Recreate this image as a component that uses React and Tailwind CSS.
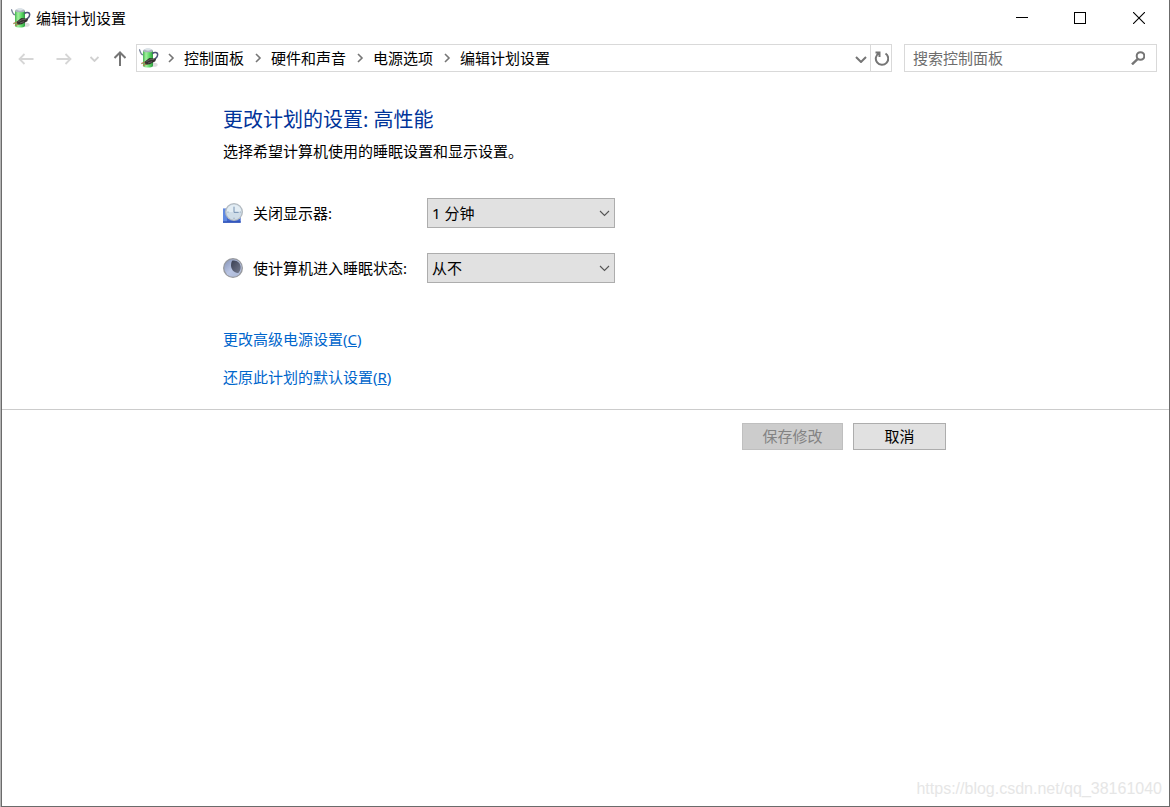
import { useState } from 'react'

const crumbs = ['控制面板', '硬件和声音', '电源选项', '编辑计划设置'];

function PowerIcon() {
    return(
        <svg viewBox="0 0 60 60" className="h-5 w-5 shrink-0" aria-hidden="true">
            <defs>
                <linearGradient id="can" x1="0" x2="1" y1="0" y2="0">
                    <stop offset="0" stopColor="#45b552" />
                    <stop offset="0.3" stopColor="#a4f09f" />
                    <stop offset="0.65" stopColor="#5cd864" />
                    <stop offset="1" stopColor="#2f9c42" />
                </linearGradient>
            </defs>
            <ellipse cx="46" cy="50" rx="10" ry="6" fill="#dcdcdc" />
            <path d="M1 4l4 10c2 5 5 7 10 6" fill="none" stroke="#77829a" strokeWidth="4" />
            <path d="M12 9v45c3 6 27 6 30 0V9z" fill="url(#can)" />
            <ellipse cx="27" cy="8" rx="15" ry="5" fill="#a9b4bc" />
            <ellipse cx="27" cy="4" rx="9" ry="4" fill="#dce3e8" />
            <path d="M40 17c5-5 16-5 16 3 0 8-6 10-10 15" fill="none" stroke="#4d5478" strokeWidth="4.500" />
            <path d="M15 43l16-13 20 2-2 8-17 9-12 1z" fill="#35302f" />
            <path d="M22 41l11-6 13-1M27 45l12-4" fill="none" stroke="#77716e" strokeWidth="2" />
            <path d="M18 42l-11 5M22 48l-10 5" stroke="#a8834f" strokeWidth="4" />
        </svg>
    );
}

function DisplayIcon() {
    return(
        <svg viewBox="0 0 60 60" className="h-5 w-5 shrink-0" aria-hidden="true">
            <path d="M0 17h53v42H0z" fill="#3f66cf" />
            <path d="M0 17h12v42H0z" fill="#6089e0" />
            <path d="M0 55h53v4H0z" fill="#2f50b5" />
            <circle cx="33" cy="27" r="27" fill="#b3bac0" />
            <circle cx="33" cy="27" r="23" fill="#cfdde8" />
            <path d="M11 27a22 22 0 0 1 44 0z" fill="#e3edf4" />
            <path d="M33 11v17h14" fill="none" stroke="#7490b0" strokeWidth="3" />
            <path d="M33 44v4M13 27h4M50 27h4" stroke="#7f93a8" strokeWidth="2" />
        </svg>
    );
}

function SleepIcon() {
    return(
        <svg viewBox="0 0 60 60" className="h-5 w-5 shrink-0" aria-hidden="true">
            <defs>
                <linearGradient id="night" x1="0" x2="1" y1="0" y2="1">
                    <stop offset="0" stopColor="#3a3f52" />
                    <stop offset="1" stopColor="#747a8e" />
                </linearGradient>
                <linearGradient id="moon" x1="0" x2="1" y1="0" y2="1">
                    <stop offset="0" stopColor="#8391b5" />
                    <stop offset="0.5" stopColor="#b9c5e4" />
                    <stop offset="1" stopColor="#aab6d2" />
                </linearGradient>
            </defs>
            <circle cx="30" cy="30" r="30" fill="#97999e" />
            <circle cx="30" cy="30" r="26" fill="url(#moon)" />
            <path d="M27 8c14-4 26 7 26 20 0 7-3 13-7 17-12 1-22-10-22-23 0-5 1-10 3-14z" fill="url(#night)" />
        </svg>
    );
}

function Separator() {
    return(
        <svg viewBox="0 0 27 12" className="h-3 w-[27px] shrink-0" fill="none" stroke="#767676" strokeWidth="1.6" aria-hidden="true">
            <path d="M12 2l4 4-4 4" />
        </svg>
    );
}

function PlanSetting(props) {
    let [value, setValue] = useState(props.options[0]);

    return(
        <div className="flex items-center">
            {props.icon}
            <label htmlFor={props.id} className="w-[184px] shrink-0 pl-[10px]">{props.label}</label>
            <div className="relative w-[188px]">
                <select id={props.id} value={value} onChange={(e) => setValue(e.target.value)} className="block h-[30px] w-full appearance-none border border-[#adadad] bg-[#e1e1e1] pl-1 pr-6 text-black">
                    {props.options.map(option => <option key={option}>{option}</option>)}
                </select>
                <svg viewBox="0 0 12 8" className="pointer-events-none absolute right-1 top-[11px] h-2 w-3" fill="none" stroke="#555" strokeWidth="1.1" aria-hidden="true">
                    <path d="M1 2l4.500 4.500L10 2" />
                </svg>
            </div>
        </div>
    );
}

function TitleBar() {
    return(
        <header className="flex h-9 items-center pl-[9px]">
            <PowerIcon />
            <h1 className="grow pl-[5px]">编辑计划设置</h1>
            <button aria-label="最小化" className="flex h-9 w-[58px] items-center justify-center">
                <svg viewBox="0 0 12 12" className="h-3 w-3" stroke="#000" shapeRendering="crispEdges"><path d="M0 5.500h12" /></svg>
            </button>
            <button aria-label="最大化" className="flex h-9 w-[58px] items-center justify-center">
                <svg viewBox="0 0 12 12" className="h-3 w-3" fill="none" stroke="#000" shapeRendering="crispEdges"><path d="M.5.5h11v11H.5z" /></svg>
            </button>
            <button aria-label="关闭" className="flex h-9 w-[60px] items-center justify-center">
                <svg viewBox="0 0 12 12" className="h-3 w-3" stroke="#000" strokeWidth="1.1"><path d="M0 0l12 12M12 0L0 12" /></svg>
            </button>
        </header>
    );
}

function NavBar() {
    return(
        <nav className="flex h-11 items-center pl-4 pr-3">
            <button aria-label="后退" disabled className="mr-[22px]">
                <svg viewBox="0 0 16 16" className="block h-4 w-4" fill="none" stroke="#d6d6d6" strokeWidth="1.8"><path d="M15.500 9H1.500M6.500 4L1.500 9l5 5" /></svg>
            </button>
            <button aria-label="前进" disabled className="mr-[17px]">
                <svg viewBox="0 0 16 16" className="block h-4 w-4" fill="none" stroke="#d6d6d6" strokeWidth="1.8"><path d="M.5 9h14M9.500 4l5 5-5 5" /></svg>
            </button>
            <button aria-label="最近浏览的位置" disabled className="mr-[13px]">
                <svg viewBox="0 0 10 8" className="block h-2 w-[10px]" fill="none" stroke="#d0d0d0" strokeWidth="1.8"><path d="M1.500 3l4 4 4-4" /></svg>
            </button>
            <button aria-label="上移" className="mr-[10px]">
                <svg viewBox="0 0 14 16" className="block h-4 w-[14px]" fill="none" stroke="#757575" strokeWidth="2"><path d="M8 16.500V3M2.500 8L8 2.500 13.500 8" /></svg>
            </button>
            <div className="flex h-7 grow items-center border border-[#d9d9d9] pl-[2px]">
                <PowerIcon />
                <ol className="-ml-0.5 flex grow items-center">
                    {crumbs.map(crumb => (
                        <li key={crumb} className="flex items-center">
                            <Separator />
                            <a href="#">{crumb}</a>
                        </li>
                    ))}
                </ol>
                <button aria-label="上一个位置" className="px-[3px]">
                    <svg viewBox="0 0 12 10" className="block h-[10px] w-3" fill="none" stroke="#757575" strokeWidth="2"><path d="M1 4l5 5 5-5" /></svg>
                </button>
                <button aria-label="刷新" className="flex h-full w-[21px] items-center justify-center border-l border-[#d9d9d9]">
                    <svg viewBox="0 0 16 16" className="h-4 w-4" fill="none" stroke="#757575" strokeWidth="2"><path d="M12.500 3.500A6.200 6.200 0 1 1 6 3.200M2.500 2.500h4v4.500" /></svg>
                </button>
            </div>
            <div className="ml-3 flex h-7 w-[253px] items-center border border-[#d9d9d9] pl-2 pr-[11px]">
                <input type="search" aria-label="搜索控制面板" placeholder="搜索控制面板" className="min-w-0 grow outline-none placeholder:text-[#6d6d6d]" />
                <button aria-label="搜索">
                    <svg viewBox="0 0 14 14" className="block h-[14px] w-[14px]" fill="none" stroke="#757575"><circle cx="9.500" cy="5" r="3.800" strokeWidth="2" /><path d="M6.800 7.800L1 13.400" strokeWidth="2.400" /></svg>
                </button>
            </div>
        </nav>
    );
}

export default function App() {
    return(
        <div className="flex min-h-screen border-l border-[#b4b4b4] bg-white font-['Noto_Sans','Noto_Sans_CJK_SC',sans-serif] text-[15px] leading-5 text-black">
            <div className="flex min-w-0 grow flex-col border-x border-b border-[#6b6b6b]">
                <TitleBar />
                <NavBar />
                <main className="grow">
                    <div className="mx-auto w-[725px] max-w-full">
                        <h2 className="pt-[26px] text-xl leading-7 text-[#003399]">更改计划的设置: 高性能</h2>
                        <p className="pt-[7px]">选择希望计算机使用的睡眠设置和显示设置。</p>
                        <div className="flex flex-col gap-[25px] pt-[37px]">
                            <PlanSetting id="display" icon={<DisplayIcon />} label="关闭显示器:" options={['1 分钟', '2 分钟', '5 分钟', '从不']} />
                            <PlanSetting id="sleep" icon={<SleepIcon />} label="使计算机进入睡眠状态:" options={['从不', '1 分钟', '2 分钟', '5 分钟']} />
                        </div>
                        <div className="flex flex-col items-start gap-[18px] pb-[22px] pt-[46px] text-[#0066cc]">
                            <a href="#">更改高级电源设置(<u>C</u>)</a>
                            <a href="#">还原此计划的默认设置(<u>R</u>)</a>
                        </div>
                    </div>
                    <div className="border-t border-[#cccccc] pt-[13px]">
                        <div className="mx-auto flex w-[725px] max-w-full justify-end gap-[10px] pr-0.5">
                            <button disabled className="h-[27px] w-[101px] border border-[#bfbfbf] bg-[#cccccc] pb-0.5 text-[#838383]">保存修改</button>
                            <button className="h-[27px] w-[93px] border border-[#adadad] bg-[#e1e1e1] pb-0.5">取消</button>
                        </div>
                    </div>
                </main>
                <footer className="pb-[5px] pr-[7px] text-right font-['Liberation_Sans',sans-serif] text-base text-[#e6e6e6]">https://blog.csdn.net/qq_38161040</footer>
            </div>
        </div>
    );
}
